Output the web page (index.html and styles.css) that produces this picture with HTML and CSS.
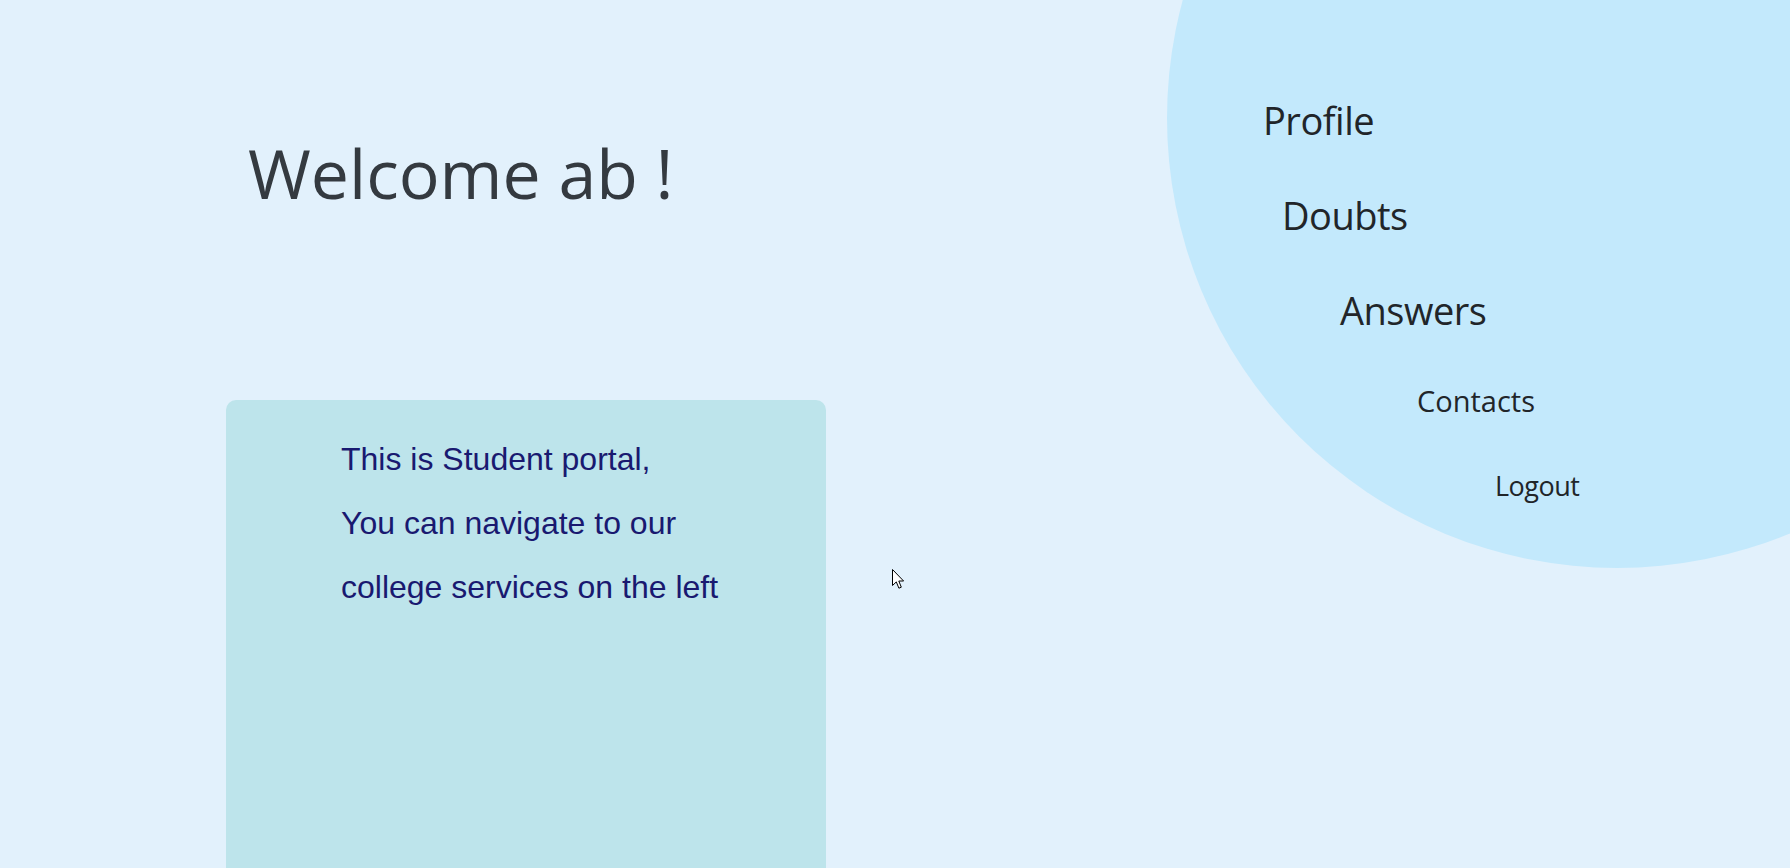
FILE: index.html
```html
<!DOCTYPE html>
<html lang="en">
<head>
<meta charset="utf-8">
<title>Student portal</title>
<link rel="stylesheet" href="styles.css">
</head>
<body>
<div class="page">
  <main class="main">
    <h1 class="welcome">Welcome ab !</h1>
    <section class="card">
      <p>This is Student portal,</p>
      <p>You can navigate to our</p>
      <p>college services on the left</p>
    </section>
  </main>
  <nav class="circle-nav">
    <a class="nav-link big profile" href="#">Profile</a>
    <a class="nav-link big doubts" href="#">Doubts</a>
    <a class="nav-link big answers" href="#">Answers</a>
    <a class="nav-link mid contacts" href="#">Contacts</a>
    <a class="nav-link small logout" href="#">Logout</a>
  </nav>
  <svg class="cursor" width="13" height="21" viewBox="0 0 13 21" aria-hidden="true">
    <path d="M0.5 0.5 L0.5 16.5 L4.3 12.9 L6.9 19.2 L9.3 18.2 L6.8 12 L11.6 12 Z" fill="#fff" stroke="#000" stroke-width="1" stroke-linejoin="miter"/>
  </svg>
</div>
</body>
</html>
```

FILE: styles.css
```css
html, body {
  margin: 0;
  padding: 0;
  background: #e2f1fc;
}

.page {
  position: relative;
  width: 100%;
  height: 100vh;
  overflow: hidden;
  background: #e2f1fc;
}

.main {
  display: flex;
  flex-direction: column;
  align-items: flex-start;
  padding-left: 226px;
  padding-top: 126px;
}

.welcome {
  margin: 0 0 181px 22px;
  font-family: "Comic Sans MS", "Open Sans", sans-serif;
  font-size: 68px;
  font-weight: 500;
  line-height: 93px;
  color: #343a40;
}

.card {
  width: 485px;
  height: 500px;
  padding: 27px 0 0 115px;
  background: #bde4eb;
  border-radius: 10px;
  font-family: "Liberation Sans", Arial, sans-serif;
  font-size: 32px;
  line-height: 64px;
  color: #191970;
}

.card p {
  margin: 0;
}

.circle-nav {
  position: absolute;
  top: -332px;
  right: -277px;
  width: 900px;
  height: 900px;
  box-sizing: border-box;
  border-radius: 50%;
  background: #c3e9fc;
  display: flex;
  flex-direction: column;
  align-items: flex-start;
  gap: 57px;
  padding-top: 433px;
  font-family: "Open Sans", "Noto Sans", sans-serif;
}

.nav-link {
  display: block;
  color: #212529;
  text-decoration: none;
  line-height: 1;
}

.big {
  font-size: 38px;
  letter-spacing: -0.5px;
}

.mid {
  font-size: 29px;
}

.small {
  font-size: 27px;
  letter-spacing: -0.5px;
}

.profile { margin-left: 96px; }
.doubts { margin-left: 115px; }
.answers { margin-left: 173px; }
.contacts { margin-left: 250px; }
.logout { margin-left: 328px; }

.cursor {
  position: absolute;
  left: 892px;
  top: 569px;
}
```
